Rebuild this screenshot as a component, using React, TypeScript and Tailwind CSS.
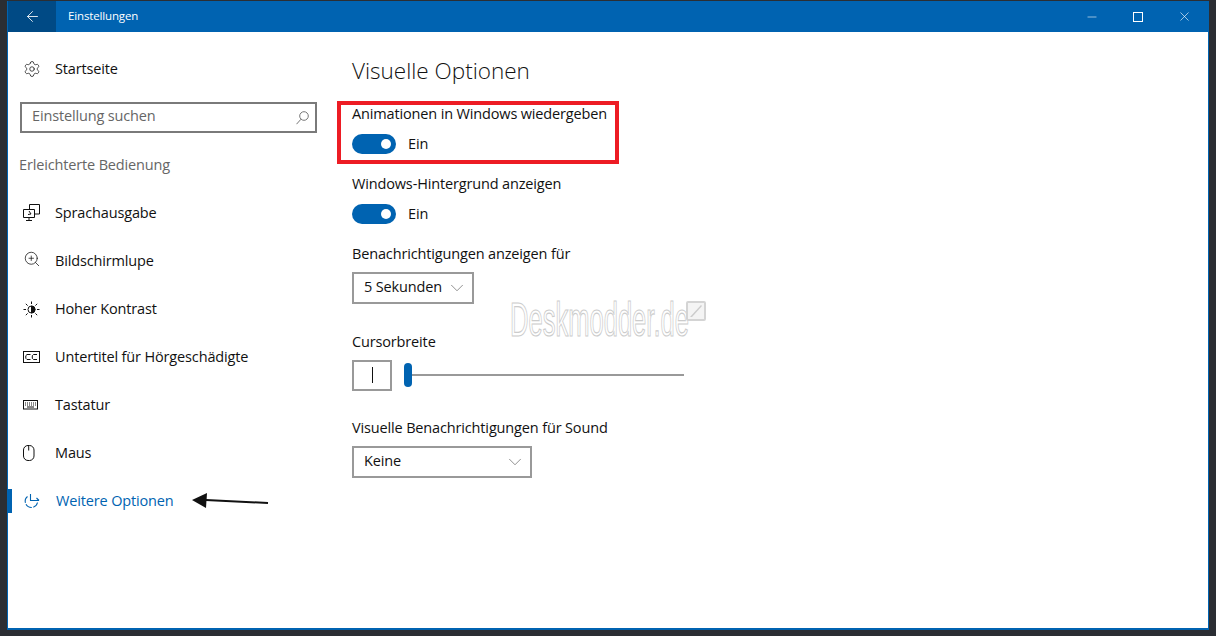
import { ArrowLeft, Settings, ZoomIn, ChevronDown, Minus, X } from "lucide-react";
import type { ReactNode } from "react";

const SpeechIcon = () => (
  <svg width="17" height="17" viewBox="0 0 17 17" fill="none" stroke="currentColor" strokeWidth="1" className="-mt-[2px]">
    <path d="M6.500 5V.5h10v9.500h-5" />
    <path d="M.5 5.500h11v8H.5zM6 13.500v2.500M3 16.500h6" />
    <path d="M6 7l2 3-3 .5" />
  </svg>
);

const SearchGlass = () => (
  <svg width="13" height="14" viewBox="0 0 13 14" fill="none" stroke="#777777" strokeWidth="1">
    <circle cx="8" cy="5" r="4.300" />
    <path d="M5 8.200L.5 13.200" />
  </svg>
);

const ContrastIcon = () => (
  <svg width="17" height="17" viewBox="0 0 17 17" fill="none" stroke="currentColor" strokeWidth="1">
    <circle cx="8.500" cy="8.500" r="3.500" />
    <path d="M8.500 5a3.500 3.500 0 0 1 0 7z" fill="currentColor" />
    <path d="M8.500 .5v2.500M8.500 14v2.500M.5 8.500H3M14 8.500h2.500M2.800 2.800l1.800 1.800M12.400 12.400l1.800 1.800M2.800 14.200l1.800-1.800M12.400 4.600l1.800-1.800" />
  </svg>
);

const CaptionIcon = () => (
  <svg width="17" height="12" viewBox="0 0 17 12" fill="none" stroke="currentColor" strokeWidth="1">
    <rect x=".5" y=".5" width="16" height="11" />
    <path d="M7.500 3.500H4L2.800 4.700v2.600L4 8.500h3.500M14 3.500h-3.500L9.300 4.700v2.600l1.200 1.200H14" />
  </svg>
);

const KeyboardIcon = () => (
  <svg width="15" height="10" viewBox="0 0 15 10" fill="none" stroke="currentColor" strokeWidth="1">
    <rect x=".5" y=".5" width="14" height="8.500" />
    <path d="M2 3h11M2 5h11" strokeDasharray="1 1" />
    <path d="M4 7h7" />
  </svg>
);

const MouseIcon = () => (
  <svg width="12" height="16" viewBox="0 0 12 16" fill="none" stroke="currentColor" strokeWidth="1">
    <rect x=".5" y=".5" width="10.500" height="15" rx="4.500" />
    <path d="M5.700 .5v5" />
  </svg>
);

const MoreIcon = () => (
  <svg width="17" height="15" viewBox="0 0 17 15" fill="none" stroke="currentColor" strokeWidth="1.100">
    <path d="M4.500 2.500a6.200 6.200 0 1 0 10 6" strokeDasharray="7 1.500" />
    <path d="M7.500 0v6.500H16M13.500 4l2.500 2.500" />
  </svg>
);

const navItems: { label: string; icon: ReactNode; active?: boolean }[] = [
  { label: "Sprachausgabe", icon: <SpeechIcon /> },
  { label: "Bildschirmlupe", icon: <ZoomIn size={18} strokeWidth={1} className="-mt-1" /> },
  { label: "Hoher Kontrast", icon: <ContrastIcon /> },
  { label: "Untertitel für Hörgeschädigte", icon: <CaptionIcon /> },
  { label: "Tastatur", icon: <KeyboardIcon /> },
  { label: "Maus", icon: <MouseIcon /> },
  { label: "Weitere Optionen", icon: <MoreIcon />, active: true },
];

const Toggle = () => (
  <div className="flex h-5 items-center">
    <div className="flex h-5 w-11 items-center justify-end rounded-full bg-[#0063b1] pr-[5px]">
      <div className="h-[10px] w-[10px] rounded-full bg-white" />
    </div>
    <span className="ml-3 text-[#111111]">Ein</span>
  </div>
);

const Dropdown = ({ value, width }: { value: string; width: string }) => (
  <div className={`flex h-8 items-center justify-between border-2 border-[#999999] pb-[2px] pl-[10px] pr-[4px] text-[#111111] ${width}`}>
    {value}
    <ChevronDown size={22} strokeWidth={0.7} className="mt-[2px] text-[#555555]" />
  </div>
);

export default function App() {
  return (
    <div className="h-[636px] w-[1216px] overflow-hidden bg-[#2b2e33] pl-[7px] pt-px font-['Open_Sans',sans-serif] text-[14.5px] tracking-[-0.15px]">
      <div className="h-[629px] w-[1202px] border-x border-b-2 border-[#0063b1] bg-white">
        <header className="flex h-[31px] items-center bg-[#0063b1] text-white">
          <div className="flex h-full w-12 items-center justify-center bg-[#004a85] pb-px">
            <ArrowLeft size={17} strokeWidth={1.2} />
          </div>
          <span className="ml-3 pb-[2px] text-[11.5px]">Einstellungen</span>
          <div className="ml-auto flex items-center pr-px">
            <div className="flex w-[46px] justify-center"><Minus size={14} strokeWidth={1} /></div>
            <div className="flex w-[46px] justify-center"><div className="h-[10px] w-[10px] border border-white" /></div>
            <div className="flex w-[46px] justify-center"><X size={15} strokeWidth={1} /></div>
          </div>
        </header>

        <div className="flex">
          <aside className="w-[344px] shrink-0">
            <div className="mt-[13px] flex h-12 items-center pl-[15px] text-[#111111]">
              <span className="flex w-[32px]"><Settings size={18} strokeWidth={1} /></span>
              Startseite
            </div>
            <div className="mx-3 mt-[9px] flex h-[31px] w-[297px] items-center justify-between border-2 border-[#7a7a7a] pb-[3px] pl-[10px] pr-[6px] text-[#666666]">
              Einstellung suchen
              <span className="mt-[3px]"><SearchGlass /></span>
            </div>
            <div className="mt-[22px] h-5 pl-[11px] leading-5 text-[#666666]">Erleichterte Bedienung</div>
            <nav className="mt-[14px]">
              {navItems.map((item) => (
                <div
                  key={item.label}
                  className={`flex h-12 items-center pl-4 ${item.active ? "text-[#0063b1]" : "text-[#111111]"}`}
                >
                  {item.active && <div className="-ml-4 mr-3 h-6 w-1 bg-[#0063b1]" />}
                  <span className={`-ml-px flex justify-start ${item.active ? "w-[33px]" : "w-[32px]"}`}>{item.icon}</span>
                  {item.label}
                </div>
              ))}
            </nav>
          </aside>

          <main className="relative flex-1">
            <h1 className="mt-[23px] h-8 text-[22.5px] leading-8 font-light tracking-normal text-[#111111]">Visuelle Optionen</h1>
            <div className="-ml-[15px] mt-[14px] h-[63px] w-[282px] border-4 border-[#ed1c24] pl-[11px]">
              <div className="-mt-[1px] h-5 leading-5 text-[#111111]">Animationen in Windows wiedergeben</div>
              <div className="mt-[10px]"><Toggle /></div>
            </div>
            <div className="mt-[10px] h-5 leading-5 text-[#111111]">Windows-Hintergrund anzeigen</div>
            <div className="mt-[10px]"><Toggle /></div>
            <div className="mt-[20px] h-5 leading-5 text-[#111111]">Benachrichtigungen anzeigen für</div>
            <div className="mt-[8px]"><Dropdown value="5 Sekunden" width="w-[122px]" /></div>
            <div className="mt-[28px] h-5 leading-5 text-[#111111]">Cursorbreite</div>
            <div className="mt-[8px] flex h-[30px] items-center">
              <div className="flex h-[31px] w-10 items-center justify-center border-2 border-[#999999]">
                <div className="h-4 w-px bg-[#111111]" />
              </div>
              <div className="ml-3 h-6 w-2 rounded-full bg-[#0063b1]" />
              <div className="h-0.5 w-[272px] bg-[#999999]" />
            </div>
            <div className="mt-[28px] h-5 leading-5 text-[#111111]">Visuelle Benachrichtigungen für Sound</div>
            <div className="mt-[8px]"><Dropdown value="Keine" width="w-[180px]" /></div>

            <div className="absolute left-[158px] top-[268px]">
              <span className="block origin-left scale-x-[0.655] scale-y-[1.22] whitespace-nowrap font-['Liberation_Sans',sans-serif] text-[39px] leading-10 tracking-normal text-white [-webkit-text-stroke:1px_#cccccc]">
                Deskmodder.de
              </span>
            </div>
            <svg className="absolute left-[334px] top-[269px]" width="20" height="20" viewBox="0 0 20 20">
              <rect x="1" y="1" width="18" height="18" rx="1" fill="#f4f4f4" stroke="#d4d4d4" strokeWidth="2" />
              <path d="M4 16L15 4l1 1L6 16z" fill="#cccccc" />
            </svg>
          </main>
        </div>
      </div>

      <svg className="absolute left-[192px] top-[492px]" width="78" height="18" viewBox="0 0 78 18">
        <path d="M14 8 L76 11" stroke="#111111" strokeWidth="2" />
        <path d="M0 8 L15 1 L14 16 Z" fill="#111111" />
      </svg>
    </div>
  );
}
